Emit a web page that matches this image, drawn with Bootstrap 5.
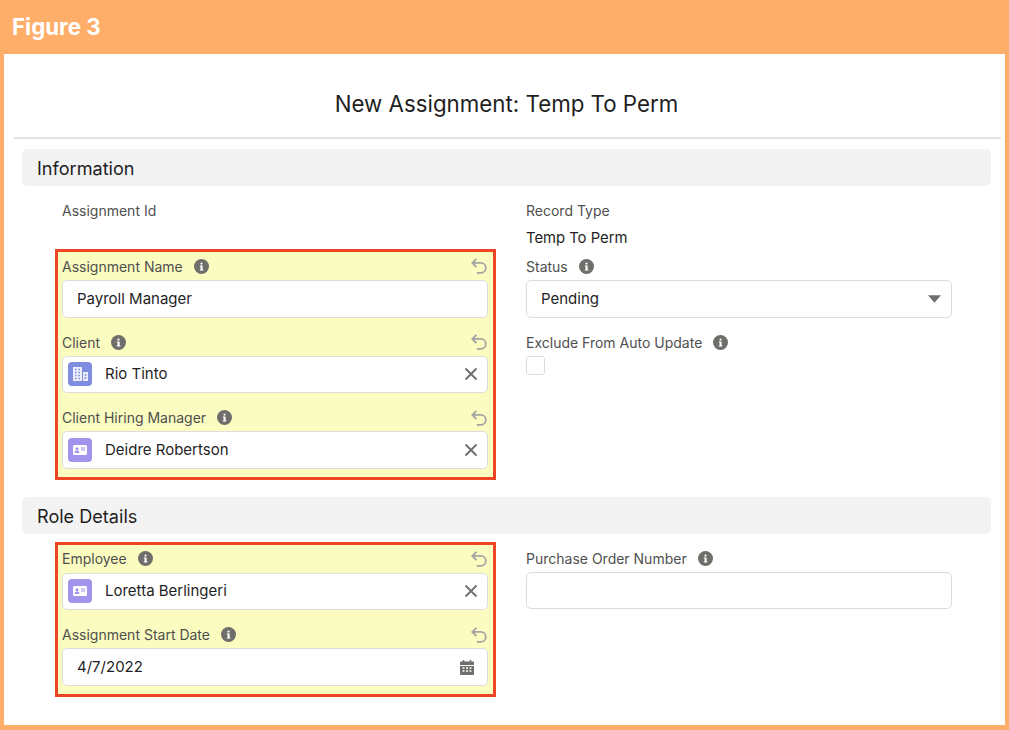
<!DOCTYPE html>
<html lang="en">

<head>
  <meta charset="UTF-8">
  <title>New Assignment: Temp To Perm</title>
  <link href="https://cdn.jsdelivr.net/npm/bootstrap@5.3.3/dist/css/bootstrap.min.css" rel="stylesheet">
  <style>
    body {
      background: #ffae6a;
      font-family: Inter, "Liberation Sans", sans-serif;
      color: #1f1f1f;
      height: 730px;
      overflow: hidden;
    }

    .fig-bar {
      height: 54px;
      padding-left: 12px;
      color: #fff;
      font-size: 22.3px;
      font-weight: 700;
    }

    .sheet {
      margin: 0 4px;
      height: 671px;
      background: #fff;
      padding: 0 4px 0 10px;
    }

    .sheet-title {
      height: 85px;
      padding: 33px 2px 0 0;
      border-bottom: 2px solid #e2e2e2;
      font-size: 22.3px;
      line-height: 34px;
      text-align: center;
    }

    .section-head {
      height: 37px;
      margin: 10px 10px 0 8px;
      padding: 2px 0 0 15px;
      background: #f3f3f3;
      border-radius: 5px;
      font-size: 18.1px;
    }

    .section-head.second {
      margin-top: 17px;
    }

    .left-col {
      width: 441px;
      margin-left: 41px;
    }

    .right-col {
      width: 426px;
      margin-left: 30px;
    }

    .changed {
      background: #fbfcc0;
      border: 3px solid #ee4526;
      padding: 0 5px 8.5px 4px;
    }

    .fld-label {
      height: 27px;
      font-size: 14px;
      color: #4f4f4f;
    }

    .fld-label.first {
      height: 28px;
    }

    .info-gap {
      gap: 11px;
    }

    .undo-ico {
      margin-right: 1.5px;
    }

    .top-label {
      margin-top: 11px;
    }

    .id-label {
      margin-bottom: 25px;
      padding-left: 7px;
    }

    .read-value {
      height: 29px;
      padding-bottom: 1px;
      font-size: 14.8px;
    }

    .role-row {
      margin-top: 7.5px;
    }

    .po-label {
      margin-top: 3px;
    }

    .fld-gap {
      margin-bottom: 11px;
    }

    .fld-box {
      height: 37.5px;
      border: 1px solid #dcdcdc;
      border-radius: 5px;
      background: #fff;
      padding: 0 13px 0 14px;
      font-size: 15px;
      color: #1f1f1f;
      box-shadow: none;
    }

    .fld-box.lookup {
      padding: 0 9px 0 5px;
    }

    .fld-box.picklist {
      padding-right: 10px;
    }

    .obj-icon {
      width: 24px;
      height: 24px;
      border-radius: 4px;
      margin-right: 13px;
    }

    .ico-account {
      background: #7f8de1;
    }

    .ico-contact {
      background: #a094ed;
    }

    .check-box {
      width: 18.5px;
      height: 19px;
      border: 1px solid #dcdcdc;
      border-radius: 3px;
    }
  </style>
</head>

<body class="m-0">

  <svg class="d-none">
    <symbol id="info" viewBox="0 0 16 16">
      <circle cx="8" cy="8" r="8" fill="#706e6b" />
      <rect x="7" y="7" width="2.200" height="5" fill="#fff" />
      <rect x="6.200" y="7" width="1.400" height="1" fill="#fff" />
      <rect x="6.200" y="11.200" width="3.800" height="1" fill="#fff" />
      <circle cx="8" cy="4.800" r="1.200" fill="#fff" />
    </symbol>
    <symbol id="undo" viewBox="0 0 16 16">
      <path d="M5.400.8 1.300 4.900l4.100 4.100M1.500 4.900h8.300a5 5 0 0 1 0 10H5.800" fill="none" stroke="#a3a3a3" stroke-width="1.800" />
    </symbol>
    <symbol id="clear" viewBox="0 0 14 14">
      <path d="M1.500 1.500l11 11M12.500 1.500l-11 11" stroke="#706e6b" stroke-width="1.800" />
    </symbol>
    <symbol id="contact" viewBox="0 0 24 24">
      <rect x="5" y="7" width="14" height="10" rx="1.500" fill="#fff" />
      <circle cx="9" cy="10.800" r="1.500" fill="#a094ed" />
      <path d="M6.600 15c0-1.700 1-2.400 2.400-2.400s2.400.7 2.400 2.400z" fill="#a094ed" />
      <path d="M13 10h4.200M13 12h4.200" stroke="#a094ed" stroke-width="1.100" />
    </symbol>
    <symbol id="account" viewBox="0 0 24 24">
      <path d="M5 5h9v14H5zM15 10h5v9h-5z" fill="#fff" fill-opacity=".85" />
      <path d="M7 7.500h1.500M10.500 7.500H12M7 10.500h1.500M10.500 10.500H12M7 13.500h1.500M10.500 13.500H12M7 16.500h1.500M10.500 16.500H12M16.500 13h2M16.500 16h2" stroke="#7f8de1" stroke-width="1.300" />
    </symbol>
  </svg>

  <div class="fig-bar d-flex align-items-center">Figure 3</div>

  <div class="sheet">
    <div class="sheet-title">New Assignment: Temp To Perm</div>

    <div class="section-head d-flex align-items-center">Information</div>
    <div class="d-flex">
      <div class="left-col">
        <div class="fld-label top-label id-label d-flex align-items-center">Assignment Id</div>
        <div class="changed">
          <div class="fld-label first d-flex align-items-center justify-content-between">
            <span class="d-flex align-items-center info-gap">Assignment Name <svg width="15" height="15"><use href="#info" /></svg></span>
            <svg class="undo-ico" width="16" height="16"><use href="#undo" /></svg>
          </div>
          <div class="fld-box form-control d-flex align-items-center fld-gap">Payroll Manager</div>
          <div class="fld-label d-flex align-items-center justify-content-between">
            <span class="d-flex align-items-center info-gap">Client <svg width="15" height="15"><use href="#info" /></svg></span>
            <svg class="undo-ico" width="16" height="16"><use href="#undo" /></svg>
          </div>
          <div class="fld-box lookup form-control d-flex align-items-center fld-gap">
            <svg class="obj-icon ico-account"><use href="#account" /></svg>
            <span class="flex-grow-1">Rio Tinto</span>
            <svg width="14" height="14"><use href="#clear" /></svg>
          </div>
          <div class="fld-label d-flex align-items-center justify-content-between">
            <span class="d-flex align-items-center info-gap">Client Hiring Manager <svg width="15" height="15"><use href="#info" /></svg></span>
            <svg class="undo-ico" width="16" height="16"><use href="#undo" /></svg>
          </div>
          <div class="fld-box lookup form-control d-flex align-items-center">
            <svg class="obj-icon ico-contact"><use href="#contact" /></svg>
            <span class="flex-grow-1">Deidre Robertson</span>
            <svg width="14" height="14"><use href="#clear" /></svg>
          </div>
        </div>
      </div>
      <div class="right-col">
        <div class="fld-label top-label d-flex align-items-center">Record Type</div>
        <div class="read-value d-flex align-items-center">Temp To Perm</div>
        <div class="fld-label d-flex align-items-center info-gap">Status <svg width="15" height="15"><use href="#info" /></svg></div>
        <div class="fld-box picklist form-control d-flex align-items-center justify-content-between fld-gap">
          Pending
          <svg width="13" height="8" viewBox="0 0 14 8"><path d="M0 0h14L7 8z" fill="#706e6b" /></svg>
        </div>
        <div class="fld-label d-flex align-items-center info-gap">Exclude From Auto Update <svg width="15" height="15"><use href="#info" /></svg></div>
        <div class="check-box"></div>
      </div>
    </div>

    <div class="section-head second d-flex align-items-center">Role Details</div>
    <div class="d-flex role-row">
      <div class="left-col">
        <div class="changed">
          <div class="fld-label first d-flex align-items-center justify-content-between">
            <span class="d-flex align-items-center info-gap">Employee <svg width="15" height="15"><use href="#info" /></svg></span>
            <svg class="undo-ico" width="16" height="16"><use href="#undo" /></svg>
          </div>
          <div class="fld-box lookup form-control d-flex align-items-center fld-gap">
            <svg class="obj-icon ico-contact"><use href="#contact" /></svg>
            <span class="flex-grow-1">Loretta Berlingeri</span>
            <svg width="14" height="14"><use href="#clear" /></svg>
          </div>
          <div class="fld-label d-flex align-items-center justify-content-between">
            <span class="d-flex align-items-center info-gap">Assignment Start Date <svg width="15" height="15"><use href="#info" /></svg></span>
            <svg class="undo-ico" width="16" height="16"><use href="#undo" /></svg>
          </div>
          <div class="fld-box form-control d-flex align-items-center justify-content-between">
            4/7/2022
            <svg width="14" height="16" viewBox="0 0 14 16">
              <path d="M0 3.500a1 1 0 0 1 1-1h12a1 1 0 0 1 1 1V6H0zM0 7h14v8a1 1 0 0 1-1 1H1a1 1 0 0 1-1-1z" fill="#706e6b" />
              <path d="M3.500 1v2.500M10.500 1v2.500" stroke="#706e6b" stroke-width="1.600" />
              <path d="M2.500 9h2M6 9h2M9.500 9h2M2.500 12h2M6 12h2M9.500 12h2" stroke="#fff" stroke-width="1.400" />
            </svg>
          </div>
        </div>
      </div>
      <div class="right-col">
        <div class="fld-label po-label d-flex align-items-center info-gap">Purchase Order Number <svg width="15" height="15"><use href="#info" /></svg></div>
        <input class="fld-box form-control" type="text">
      </div>
    </div>
  </div>

</body>

</html>
